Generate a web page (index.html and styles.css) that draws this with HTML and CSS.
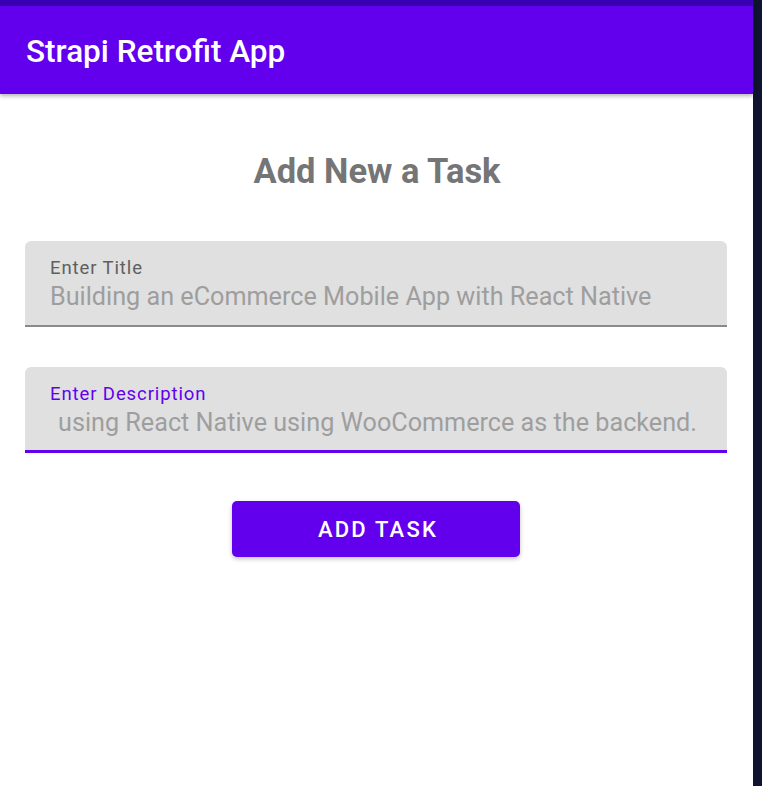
FILE: index.html
```html
<!DOCTYPE html>
<html>
<head>
<meta charset="utf-8">
<link rel="stylesheet" href="styles.css">
</head>
<body>
<div class="device">
  <div class="screen">
    <div class="statusbar"></div>
    <header class="appbar"><span class="appbar-title">Strapi Retrofit App</span></header>
    <main class="content">
      <h1 class="heading">Add New a Task</h1>
      <div class="field">
        <span class="field-label">Enter Title</span>
        <span class="field-value">Building an eCommerce Mobile App with React Native</span>
      </div>
      <div class="field field-focused">
        <span class="field-label">Enter Description</span>
        <span class="field-value field-value-indent">using React Native using WooCommerce as the backend.</span>
      </div>
      <div class="actions">
        <button class="btn">ADD TASK</button>
      </div>
    </main>
  </div>
  <div class="edge"></div>
</div>
</body>
</html>
```
FILE: styles.css
```css
* { box-sizing: border-box; }
html, body { margin: 0; padding: 0; height: 100%; }
body { font-family: Roboto, "Noto Sans", sans-serif; background: #ffffff; }
.device { display: flex; height: 786px; }
.screen { width: 753px; background: #ffffff; display: flex; flex-direction: column; }
.edge { flex: 1; background: #0e1330; }
.statusbar { height: 6px; background: #3700b3; }
.appbar {
  height: 88px;
  background: #6200ee;
  display: flex;
  align-items: center;
  padding-left: 26px;
  box-shadow: 0 2px 4px rgba(0,0,0,0.3);
  position: relative;
  z-index: 1;
}
.appbar-title { color: #ffffff; font-size: 31.5px; font-weight: 500; padding-top: 2px; }
.content { padding: 0 26px 0 25px; display: flex; flex-direction: column; }
.heading {
  margin: 55px 0 0;
  text-align: center;
  font-size: 34.5px;
  font-weight: 700;
  color: #757575;
  line-height: 44px;
  padding-left: 2px;
}
.field {
  margin-top: 48px;
  height: 86px;
  background: #e0e0e0;
  border-radius: 6px 6px 0 0;
  border-bottom: 2px solid #8a8a8a;
  padding: 16px 25px 0;
  display: flex;
  flex-direction: column;
}
.field + .field { margin-top: 40px; }
.field-focused { border-bottom: 3px solid #6200ee; }
.field-label { font-size: 18.5px; color: #5f5f5f; line-height: 23px; letter-spacing: 0.9px; }
.field-focused .field-label { color: #6200ee; }
.field-value { font-size: 25.2px; color: #9e9e9e; line-height: 34px; margin-top: 0; }
.field-value-indent { padding-left: 8px; }
.actions { display: flex; justify-content: center; margin-top: 48px; }
.btn {
  width: 288px;
  height: 56px;
  background: #6200ee;
  color: #ffffff;
  border: none;
  border-radius: 5px;
  padding: 0 0 0 4px;
  font-family: Roboto, "Noto Sans", sans-serif;
  font-size: 22px;
  font-weight: 500;
  letter-spacing: 2.2px;
  box-shadow: 0 2px 4px rgba(0,0,0,0.25);
}
```
